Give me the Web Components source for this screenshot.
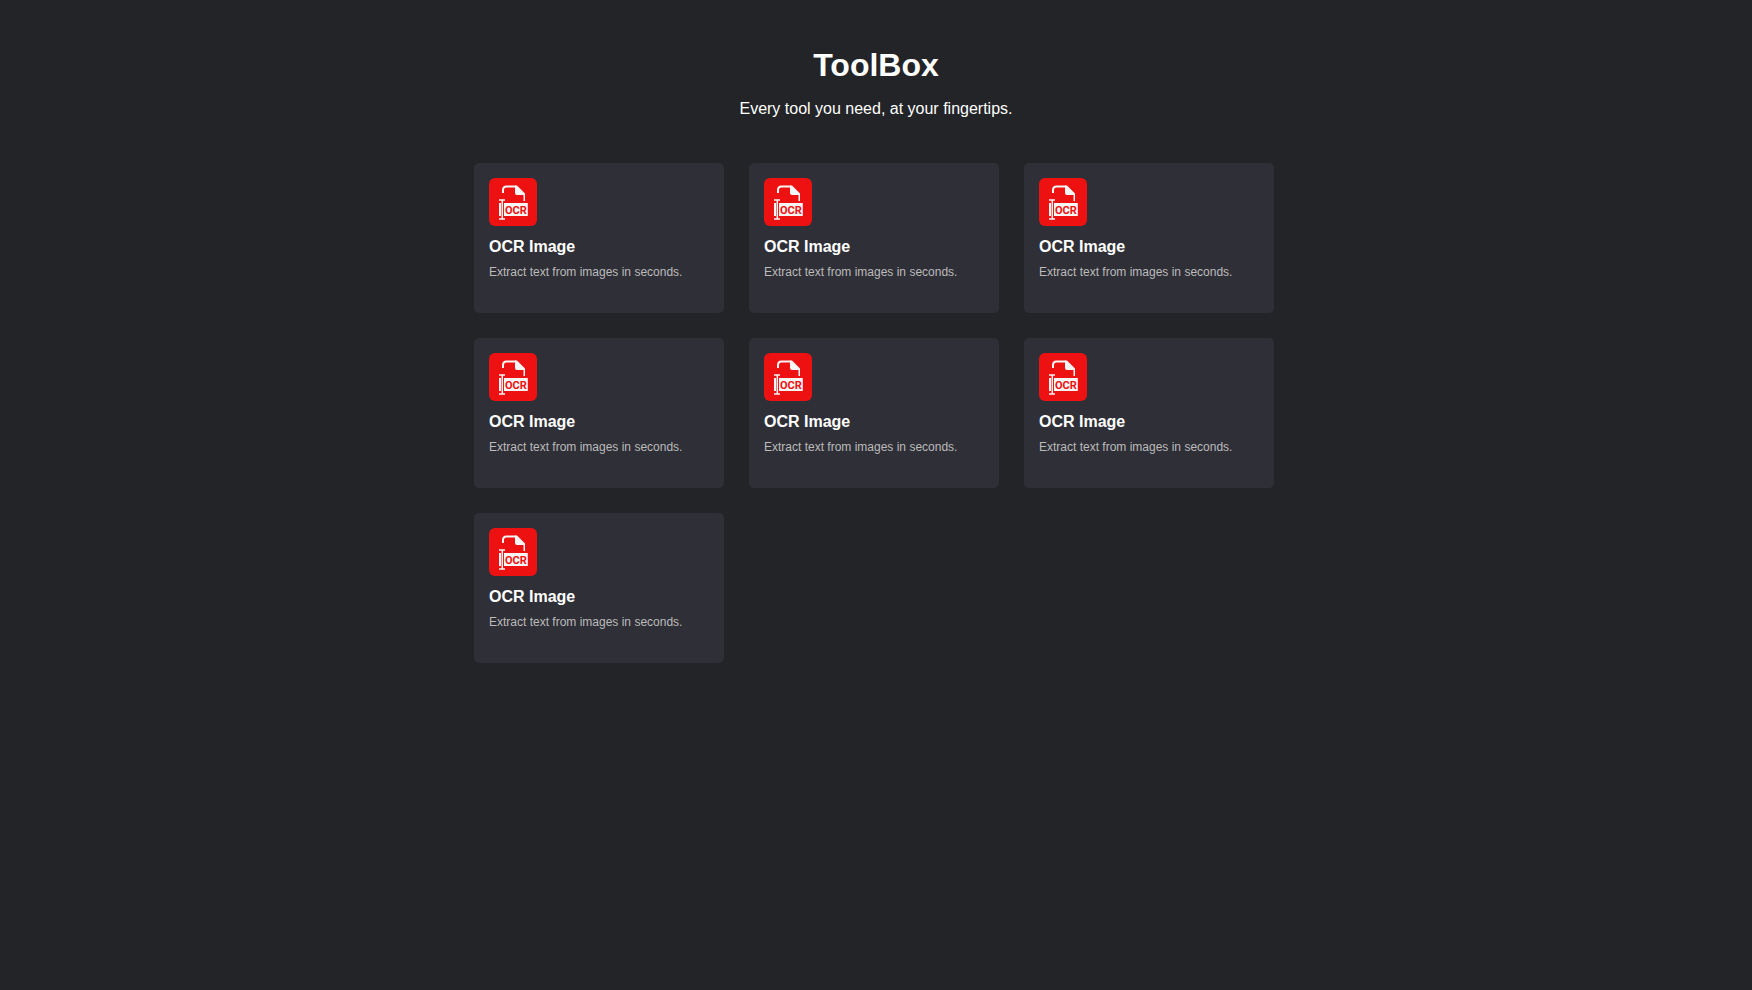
<!DOCTYPE html>
<html lang="en">
<head>
<meta charset="utf-8">
<meta name="viewport" content="width=device-width, initial-scale=1">
<title>ToolBox</title>
<style>
  body {
    margin: 0;
    background: #232427;
    color: #fff;
    font-family: "Liberation Sans", Arial, sans-serif;
  }
</style>
</head>
<body>
<tool-box></tool-box>
<script>
class OcrIcon extends HTMLElement {
  constructor() {
    super();
    this.attachShadow({ mode: "open" }).innerHTML = `
      <style>
        :host { display: block; width: 48px; height: 48px; border-radius: 6px; background: #ee1111; }
        svg { display: block; width: 100%; height: 100%; }
        text { font: bold 11px Roboto, "Liberation Sans", sans-serif; fill: #ee1111; }
      </style>
      <svg viewBox="0 0 48 48" aria-hidden="true">
        <path d="M14 15V12Q14 8.500 17.500 8.500H27" fill="none" stroke="#f6f6f6" stroke-width="2"/>
        <path d="M26 7.500H28L36 15.500V23H34.500V17H28Q26 17 26 15Z" fill="#f6f6f6"/>
        <path d="M15 25H38.800V38H15Z" fill="#f6f6f6"/>
        <path d="M10 25H12V38H10Z" fill="#f6f6f6"/>
        <path d="M10 22H16M13.300 22V41M10 41H16" fill="none" stroke="#f6f6f6" stroke-width="1.500"/>
        <text x="16" y="36">OCR</text>
      </svg>`;
  }
}

class ToolCard extends HTMLElement {
  constructor() {
    super();
    this.attachShadow({ mode: "open" }).innerHTML = `
      <style>
        :host {
          display: block;
          box-sizing: border-box;
          min-height: 150px;
          padding: 15px;
          border-radius: 5px;
          background: #2f2f37;
        }
        h2 { margin: 12px 0 0; font-size: 16px; line-height: 18px; font-weight: bold; }
        p { margin: 9px 0 0; font-size: 12px; line-height: 14px; color: #bbb; }
      </style>
      <ocr-icon></ocr-icon>
      <h2><slot name="title"></slot></h2>
      <p><slot></slot></p>`;
  }
}

class ToolBox extends HTMLElement {
  constructor() {
    super();
    const card = `<tool-card><span slot="title">OCR Image</span>Extract text from images in seconds.</tool-card>`;
    this.attachShadow({ mode: "open" }).innerHTML = `
      <style>
        :host { display: block; padding: 47px 16px; }
        header { text-align: center; }
        h1 { margin: 0; font-size: 32px; line-height: 37px; }
        header p { margin: 16px 0 0; font-size: 16px; line-height: 18px; }
        main {
          display: grid;
          grid-template-columns: repeat(auto-fill, 250px);
          gap: 25px;
          max-width: 804px;
          margin: 45px auto 0;
        }
      </style>
      <header>
        <h1>ToolBox</h1>
        <p>Every tool you need, at your fingertips.</p>
      </header>
      <main>${card.repeat(7)}</main>`;
  }
}

customElements.define("ocr-icon", OcrIcon);
customElements.define("tool-card", ToolCard);
customElements.define("tool-box", ToolBox);
</script>
</body>
</html>
